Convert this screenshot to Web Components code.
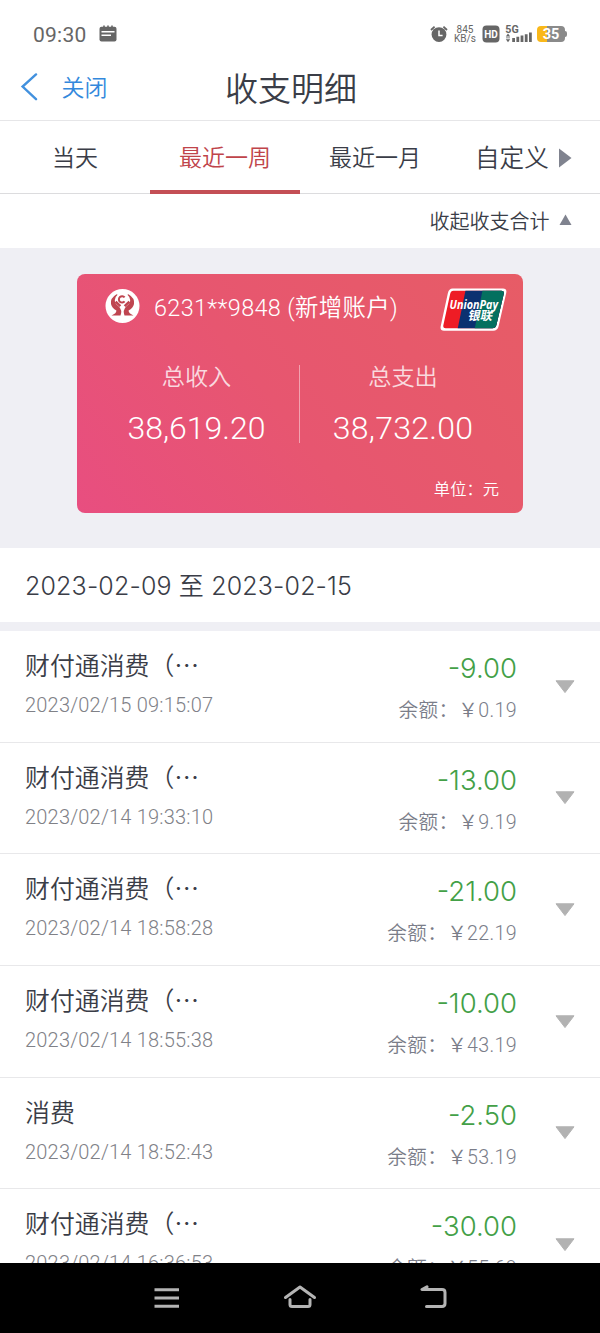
<!DOCTYPE html>
<html lang="zh-CN">
<head>
<meta charset="UTF-8">
<meta name="viewport" content="width=device-width, initial-scale=1">
<title>收支明细</title>
<style>
  body {
    margin: 0;
    font-family: Roboto, "Noto Sans CJK SC", sans-serif;
    font-weight: 350;
    color: #3a3d47;
  }
</style>
</head>
<body>
<bill-page>
  <status-bar slot="top" time="09:30"></status-bar>
  <nav-header slot="top" back="关闭">收支明细</nav-header>
  <range-tabs slot="top"></range-tabs>
  <sum-toggle slot="top">收起收支合计</sum-toggle>
  <account-card slot="top" number="6231**9848 (新增账户)" income="38,619.20" expense="38,732.00"></account-card>
  <date-range slot="top">2023-02-09 至 2023-02-15</date-range>
  <bill-item name="财付通消费（…" time="2023/02/15 09:15:07" amount="-9.00" balance="0.19"></bill-item>
  <bill-item name="财付通消费（…" time="2023/02/14 19:33:10" amount="-13.00" balance="9.19"></bill-item>
  <bill-item name="财付通消费（…" time="2023/02/14 18:58:28" amount="-21.00" balance="22.19"></bill-item>
  <bill-item name="财付通消费（…" time="2023/02/14 18:55:38" amount="-10.00" balance="43.19"></bill-item>
  <bill-item name="消费" time="2023/02/14 18:52:43" amount="-2.50" balance="53.19"></bill-item>
  <bill-item name="财付通消费（…" time="2023/02/14 16:36:53" amount="-30.00" balance="55.69"></bill-item>
  <system-nav slot="bottom"></system-nav>
</bill-page>

<script>
/**
 * BillPage
 * 顶部固定区 + 列表 + 底部系统导航
 */
class BillPage extends HTMLElement {
  static {
    customElements.define("bill-page", this);
  }
  constructor() {
    super();
    this.attachShadow({ mode: "open" }).innerHTML = /* html */ `
      <style>
        :host {
          display: flex;
          flex-direction: column;
          width: 600px;
          height: 1333px;
          overflow: hidden;
          background: #fff;
        }
        .list {
          flex: 1;
          min-height: 0;
          overflow: hidden;
        }
      </style>
      <slot name="top"></slot>
      <div class="list"><slot></slot></div>
      <slot name="bottom"></slot>
    `;
  }
}

/**
 * StatusBar
 * @param {string} time - 左侧时间
 */
class StatusBar extends HTMLElement {
  static {
    customElements.define("status-bar", this);
  }
  constructor() {
    super();
    this.attachShadow({ mode: "open" });
  }
  connectedCallback() {
    this.shadowRoot.innerHTML = /* html */ `
      <style>
        :host {
          display: flex;
          align-items: center;
          height: 68px;
          padding: 0 32px 0 33px;
          box-sizing: border-box;
          font-weight: 400;
          color: #666;
        }
        .time {
          margin: 1px 12px 0 0;
          font-size: 21px;
          line-height: 24px;
          letter-spacing: 0.25px;
        }
        .right {
          display: flex;
          align-items: center;
          margin-left: auto;
        }
        .speed {
          width: 22px;
          margin: 0 6px 0 6px;
          font-size: 10px;
          line-height: 9px;
          text-align: center;
          white-space: nowrap;
        }
        svg {
          display: block;
        }
      </style>
      <span class="time">${this.getAttribute("time")}</span>
      <svg width="18" height="18" viewBox="0 0 18 18">
        <path d="M5 3V0.6M9 3V0.6M13 3V0.6" stroke="#666" stroke-width="1.6"/>
        <rect x="0.5" y="1.8" width="17" height="14.6" rx="2" fill="#666"/>
        <path d="M2.5 6.8H15.5M2.5 10.2H12" stroke="#fff" stroke-width="1.4"/>
      </svg>
      <div class="right">
        <svg width="18" height="18" viewBox="0 0 18 18">
          <circle cx="9" cy="9.6" r="7.4" fill="#666"/>
          <path d="M1 5 4.6 1.6M13.4 1.6 17 5" stroke="#666" stroke-width="1.8"/>
          <path d="M9 5.5V10.5H12.6" fill="none" stroke="#fff" stroke-width="1.5"/>
        </svg>
        <div class="speed">845<br>KB/s</div>
        <svg width="18" height="18" viewBox="0 0 18 18">
          <rect x="0.5" y="0.5" width="17" height="17" rx="4" fill="#666"/>
          <text x="9" y="12.8" fill="#fff" font-size="10.5" font-weight="700" text-anchor="middle" textLength="13.6" lengthAdjust="spacingAndGlyphs">HD</text>
        </svg>
        <svg width="28" height="28" viewBox="0 -4 28 28" style="margin: 0 4px 0 5px">
          <text x="0.3" y="8.6" fill="#666" font-size="11.5" font-weight="700" textLength="13.4" lengthAdjust="spacingAndGlyphs">5G</text>
          <path d="M3 9.4 5.2 12.4H0.8ZM3 18.2 0.8 15.2H5.2ZM1 13.4H5V14.2H1Z" fill="#666"/>
          <path d="M8.6 14V18M12.8 12.8V18M17 11.6V18M21.2 10.2V18M25.4 8.6V18" stroke="#666" stroke-width="2.8"/>
        </svg>
        <svg width="31" height="16" viewBox="0 0 31 16">
          <path d="M4 0H10V16H4A4 4 0 0 1 0 12V4A4 4 0 0 1 4 0Z" fill="#f9b81a"/>
          <path d="M10 0H24A4 4 0 0 1 28 4V5Q30 5 30 7V9Q30 11 28 11V12A4 4 0 0 1 24 16H10Z" fill="#8a8a8a"/>
          <text x="14" y="13" fill="#fff" font-size="14.5" font-weight="700" text-anchor="middle">35</text>
        </svg>
      </div>
    `;
  }
}

/**
 * NavHeader
 * @param {string} back - 返回文字
 */
class NavHeader extends HTMLElement {
  static {
    customElements.define("nav-header", this);
  }
  constructor() {
    super();
    this.attachShadow({ mode: "open" });
  }
  connectedCallback() {
    this.shadowRoot.innerHTML = /* html */ `
      <style>
        :host {
          display: grid;
          grid-template-columns: 200px 1fr 218px;
          height: 53px;
          box-sizing: border-box;
          border-bottom: 1px solid #e6e6e8;
        }
        .back {
          display: flex;
          padding: 5px 0 0 20px;
          color: #3388dc;
          font-size: 23px;
          line-height: 28px;
        }
        .back span {
          margin-top: 2px;
        }
        svg {
          margin-right: 23.5px;
        }
        .title {
          margin-top: 2px;
          font-size: 33px;
          line-height: 40px;
          text-align: center;
          white-space: nowrap;
        }
      </style>
      <div class="back">
        <svg width="18" height="28" viewBox="0 0 18 28">
          <path d="M16 1.4 2.6 13.6 16 26.2" fill="none" stroke="#4291de" stroke-width="2.4" stroke-linecap="round"/>
        </svg>
        <span>${this.getAttribute("back")}</span>
      </div>
      <div class="title"><slot></slot></div>
    `;
  }
}

/**
 * RangeTabs
 * 时间范围切换
 */
class RangeTabs extends HTMLElement {
  static {
    customElements.define("range-tabs", this);
  }
  constructor() {
    super();
    this.attachShadow({ mode: "open" }).innerHTML = /* html */ `
      <style>
        :host {
          display: grid;
          grid-template-columns: repeat(4, 1fr);
          height: 73px;
          background: linear-gradient(#dcdcde, #dcdcde) bottom / 100% 1.5px no-repeat;
        }
        .tab {
          box-sizing: border-box;
          padding-top: 22px;
          border-bottom: 4px solid transparent;
          font-size: 23px;
          line-height: 32px;
          text-align: center;
          white-space: nowrap;
        }
        .active {
          color: #c0444a;
          border-color: #c44f55;
        }
        .custom {
          display: flex;
          padding-left: 25px;
          font-size: 24.6px;
        }
        svg {
          margin: 5px 0 0 10px;
        }
      </style>
      <div class="tab">当天</div>
      <div class="tab active">最近一周</div>
      <div class="tab">最近一月</div>
      <div class="tab custom">自定义
        <svg width="13" height="20" viewBox="0 0 13 20"><path d="M0 0.5 12.5 10 0 19.5Z" fill="#80838f"/></svg>
      </div>
    `;
  }
}

/**
 * SumToggle
 * 收起 / 展开合计
 */
class SumToggle extends HTMLElement {
  static {
    customElements.define("sum-toggle", this);
  }
  constructor() {
    super();
    this.attachShadow({ mode: "open" }).innerHTML = /* html */ `
      <style>
        :host {
          display: flex;
          justify-content: flex-end;
          height: 54px;
          box-sizing: border-box;
          padding: 14px 28.5px 0 0;
          font-size: 20px;
          line-height: 28px;
        }
        svg {
          margin: 5.5px 0 0 9px;
        }
      </style>
      <slot></slot>
      <svg width="13" height="12" viewBox="0 0 13 12"><path d="M6.5 0.5 12.5 11H0.5Z" fill="#80838f"/></svg>
    `;
  }
}

/**
 * AccountCard
 * @param {string} number - 卡号
 * @param {string} income - 总收入
 * @param {string} expense - 总支出
 */
class AccountCard extends HTMLElement {
  static {
    customElements.define("account-card", this);
  }
  constructor() {
    super();
    this.attachShadow({ mode: "open" });
  }
  connectedCallback() {
    this.shadowRoot.innerHTML = /* html */ `
      <style>
        :host {
          display: block;
          height: 300px;
          box-sizing: border-box;
          padding: 25.5px 77px 0;
          background: #efeff4;
          color: #fff;
        }
        .card {
          display: flex;
          flex-direction: column;
          height: 239.5px;
          border-radius: 8px;
          background: linear-gradient(52deg, #e84e80, #e75670 45%, #e75c66);
        }
        .head {
          display: flex;
          align-items: flex-start;
          height: 91px;
          box-sizing: border-box;
          padding: 14px 15px 0 28px;
        }
        .number {
          margin: 4px auto 0 14px;
          font-size: 23.4px;
          line-height: 32px;
          letter-spacing: 0.35px;
          white-space: nowrap;
        }
        .sums {
          display: grid;
          grid-template-columns: 222px 1px 1fr;
          height: 78px;
        }
        .line {
          height: 78px;
          background: rgba(255, 255, 255, 0.45);
        }
        .sum {
          text-align: center;
        }
        .left {
          padding-left: 17px;
        }
        .right {
          padding-right: 17px;
        }
        .label {
          font-size: 23.2px;
          line-height: 24px;
          color: rgba(255, 255, 255, 0.78);
        }
        .value {
          margin-top: 20px;
          font-size: 32px;
          line-height: 38px;
        }
        .right .value {
          letter-spacing: 0.3px;
        }
        .unit {
          margin: 35px 24px 0 0;
          font-size: 16.3px;
          line-height: 24px;
          text-align: right;
        }
      </style>
      <div class="card">
        <div class="head">
          <svg width="35" height="36" viewBox="0 0 35 36">
            <circle cx="17.5" cy="18" r="17" fill="#fff"/>
            <g fill="#bf4550">
              <path d="M11.6 6.2Q5 10 6 16Q7 20 11.4 22.6Q11.6 25.4 6.5 27.6H15.5Q17.6 22 13.6 18.2Q9.6 15.5 9.8 12Q10 9 12.6 6.8Z"/>
              <path d="M23.4 6.2Q30 10 29 16Q28 20 23.6 22.6Q23.4 25.4 28.5 27.6H19.5Q17.4 22 21.4 18.2Q25.4 15.5 25.2 12Q25 9 22.4 6.8Z"/>
            </g>
            <path d="M10.6 13.6 15.4 18.2M24.4 13.6 19.6 18.2" fill="none" stroke="#bf4550" stroke-width="2.4"/>
            <path d="M19.6 9.4A3.2 3.2 0 1 0 19.6 13.4" fill="none" stroke="#bf4550" stroke-width="2"/>
          </svg>
          <div class="number">${this.getAttribute("number")}</div>
          <svg width="68" height="44" viewBox="0 0 68 44">
            <defs>
              <clipPath id="pay"><path d="M13.5 2.8H61.3Q64.6 2.8 63.8 5.8L56.4 37Q55.6 40.2 52.4 40.2H5.6Q2.6 40.2 3.4 37L10.2 5.8Q10.8 2.8 13.5 2.8Z"/></clipPath>
            </defs>
            <path d="M12.6 0.5H63Q67.2 0.5 66.2 5L58.6 38.3Q57.6 42.7 53.2 42.7H4Q-0.2 42.7 0.7 38.3L7.9 5Q8.9 0.5 12.6 0.5Z" fill="#fff"/>
            <g clip-path="url(#pay)">
              <rect width="68" height="44" fill="#ee1c25"/>
              <path d="M26 0H68V44H17Z" fill="#0b3170"/>
              <path d="M43 0H68V44H34Z" fill="#04705f"/>
            </g>
            <g fill="#fff" font-weight="700">
              <text x="9.6" y="21" font-size="12.5" font-style="italic" font-family="'Open Sans', sans-serif" textLength="48.5" lengthAdjust="spacingAndGlyphs">UnionPay</text>
              <text x="0" y="0" font-size="12.3" font-family="'Noto Sans CJK SC', sans-serif" transform="translate(27.5 31.8) skewX(-12)">银联</text>
            </g>
          </svg>
        </div>
        <div class="sums">
          <div class="sum left">
            <div class="label">总收入</div>
            <div class="value">${this.getAttribute("income")}</div>
          </div>
          <div class="line"></div>
          <div class="sum right">
            <div class="label">总支出</div>
            <div class="value">${this.getAttribute("expense")}</div>
          </div>
        </div>
        <div class="unit">单位：元</div>
      </div>
    `;
  }
}

/**
 * DateRange
 * 查询区间
 */
class DateRange extends HTMLElement {
  static {
    customElements.define("date-range", this);
  }
  constructor() {
    super();
    this.attachShadow({ mode: "open" }).innerHTML = /* html */ `
      <style>
        :host {
          display: block;
          height: 83px;
          box-sizing: border-box;
          padding: 22px 0 0 25px;
          border-bottom: 9px solid #efeff4;
          font-family: Inter, "Noto Sans CJK SC", sans-serif;
          font-size: 25px;
          line-height: 32px;
          letter-spacing: 0.15px;
          white-space: nowrap;
        }
      </style>
      <slot></slot>
    `;
  }
}

/**
 * BillItem
 * @param {string} name - 交易名称
 * @param {string} time - 交易时间
 * @param {string} amount - 金额
 * @param {string} balance - 余额
 */
class BillItem extends HTMLElement {
  static {
    customElements.define("bill-item", this);
  }
  constructor() {
    super();
    this.attachShadow({ mode: "open" });
  }
  connectedCallback() {
    this.shadowRoot.innerHTML = /* html */ `
      <style>
        :host {
          display: flex;
          justify-content: space-between;
          height: 111.7px;
          box-sizing: border-box;
          padding: 0 25px;
          border-bottom: 1px solid #e8e8ea;
          white-space: nowrap;
        }
        .name {
          margin-top: 17px;
          font-family: "Noto Sans CJK SC", sans-serif;
          font-size: 24.9px;
          line-height: 32px;
        }
        .time {
          margin-top: 13px;
          font-size: 20px;
          line-height: 24px;
          letter-spacing: 0.2px;
          color: #808187;
        }
        .money {
          margin-left: auto;
          text-align: right;
        }
        .amount {
          margin-top: 20px;
          font-family: Inter, sans-serif;
          font-size: 27.5px;
          line-height: 34px;
          color: #43a047;
        }
        .balance {
          margin-top: 13px;
          font-size: 19.6px;
          line-height: 26px;
          letter-spacing: 0.35px;
          color: #7a7d89;
        }
        svg {
          margin: 48.5px 0 0 38px;
        }
      </style>
      <div>
        <div class="name">${this.getAttribute("name")}</div>
        <div class="time">${this.getAttribute("time")}</div>
      </div>
      <div class="money">
        <div class="amount">${this.getAttribute("amount")}</div>
        <div class="balance">余额：￥${this.getAttribute("balance")}</div>
      </div>
      <svg width="20" height="14" viewBox="0 0 20 14"><path d="M1 0.8H19L10 12.6Z" fill="#b2b2b2" stroke="#b2b2b2" stroke-linejoin="round"/></svg>
    `;
  }
}

/**
 * SystemNav
 * 底部三键导航
 */
class SystemNav extends HTMLElement {
  static {
    customElements.define("system-nav", this);
  }
  constructor() {
    super();
    this.attachShadow({ mode: "open" }).innerHTML = /* html */ `
      <style>
        :host {
          display: flex;
          align-items: center;
          justify-content: center;
          gap: 101px;
          height: 70px;
          background: #000;
        }
        svg {
          fill: none;
          stroke: #b4b4b4;
          stroke-width: 3;
          stroke-linecap: round;
          stroke-linejoin: round;
        }
      </style>
      <svg width="32" height="26" viewBox="0 0 32 26"><path d="M4.5 4.7H29M4.5 13H29M4.5 21.3H29" stroke-linecap="butt"/></svg>
      <svg width="34" height="26" viewBox="0 0 34 26"><path d="M2.5 12.5 17 2 31.5 12.5M7 14.5V19.5Q7 21.5 9 21.5H25Q27 21.5 27 19.5V14.5"/></svg>
      <svg width="32" height="26" viewBox="0 0 32 26"><path d="M9 1.8 4 4.6H24Q27 4.6 27 7.5V18.6Q27 21.5 24 21.5H8.5"/></svg>
    `;
  }
}
</script>
</body>
</html>
